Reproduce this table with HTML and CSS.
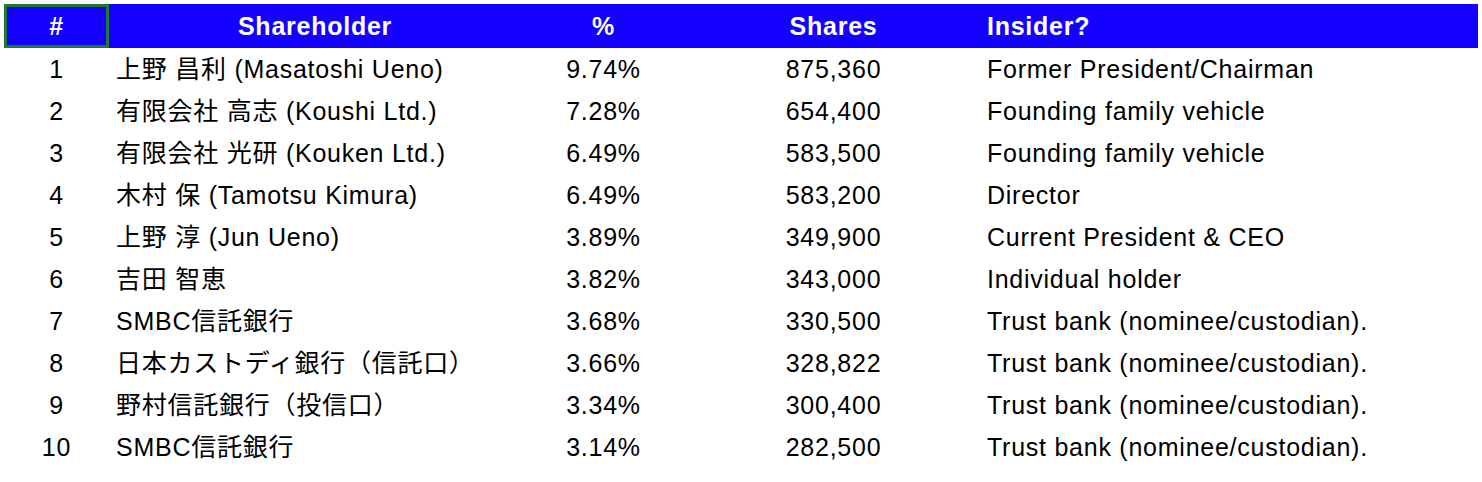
FILE: index.html
```html
<!DOCTYPE html>
<html lang="en">
<head>
<meta charset="utf-8">
<title>Shareholders</title>
<link rel="stylesheet" href="styles.css">
</head>
<body>
<table class="holders">
  <colgroup>
    <col class="c-num">
    <col class="c-name">
    <col class="c-pct">
    <col class="c-shares">
    <col class="c-ins">
  </colgroup>
  <thead>
    <tr>
      <th class="num selected">#</th>
      <th class="center">Shareholder</th>
      <th class="center">%</th>
      <th class="center">Shares</th>
      <th class="left">Insider?</th>
    </tr>
  </thead>
  <tbody>
    <tr><td class="num">1</td><td class="left">上野 昌利 (Masatoshi Ueno)</td><td class="center">9.74%</td><td class="center">875,360</td><td class="left">Former President/Chairman</td></tr>
    <tr><td class="num">2</td><td class="left">有限会社 高志 (Koushi Ltd.)</td><td class="center">7.28%</td><td class="center">654,400</td><td class="left">Founding family vehicle</td></tr>
    <tr><td class="num">3</td><td class="left">有限会社 光研 (Kouken Ltd.)</td><td class="center">6.49%</td><td class="center">583,500</td><td class="left">Founding family vehicle</td></tr>
    <tr><td class="num">4</td><td class="left">木村 保 (Tamotsu Kimura)</td><td class="center">6.49%</td><td class="center">583,200</td><td class="left">Director</td></tr>
    <tr><td class="num">5</td><td class="left">上野 淳 (Jun Ueno)</td><td class="center">3.89%</td><td class="center">349,900</td><td class="left">Current President &amp; CEO</td></tr>
    <tr><td class="num">6</td><td class="left">吉田 智恵</td><td class="center">3.82%</td><td class="center">343,000</td><td class="left">Individual holder</td></tr>
    <tr><td class="num">7</td><td class="left">SMBC信託銀行</td><td class="center">3.68%</td><td class="center">330,500</td><td class="left">Trust bank (nominee/custodian).</td></tr>
    <tr><td class="num">8</td><td class="left">日本カストディ銀行（信託口）</td><td class="center">3.66%</td><td class="center">328,822</td><td class="left">Trust bank (nominee/custodian).</td></tr>
    <tr><td class="num">9</td><td class="left">野村信託銀行（投信口）</td><td class="center">3.34%</td><td class="center">300,400</td><td class="left">Trust bank (nominee/custodian).</td></tr>
    <tr><td class="num">10</td><td class="left">SMBC信託銀行</td><td class="center">3.14%</td><td class="center">282,500</td><td class="left">Trust bank (nominee/custodian).</td></tr>
  </tbody>
</table>
</body>
</html>
```
FILE: styles.css
```css
html, body {
  background: #ffffff;
}
body {
  margin: 4px;
  font-family: "Liberation Sans", Arial, "Noto Sans CJK JP", sans-serif;
  font-size: 25px;
  letter-spacing: 0.75px;
  color: #000000;
}
.holders {
  width: 100%;
  border-collapse: collapse;
  table-layout: fixed;
}
.c-num { width: 105px; }
.c-name { width: 412px; }
.c-pct { width: 165px; }
.c-shares { width: 295px; }
.holders th {
  background: #1400ff;
  color: #ffffff;
  font-weight: bold;
  height: 44px;
  line-height: 28px;
  padding: 0;
  vertical-align: middle;
  white-space: nowrap;
}
.holders td {
  height: 42px;
  line-height: 28px;
  padding: 0;
  vertical-align: middle;
  white-space: nowrap;
}
.num, .center {
  text-align: center;
}
.holders .left {
  text-align: left;
  padding-left: 7px;
}
.holders th.left {
  padding-left: 6px;
}
.holders td.left:last-child {
  padding-left: 6px;
}
.selected {
  box-shadow: inset 0 0 0 3px #1f7a34;
}
```
